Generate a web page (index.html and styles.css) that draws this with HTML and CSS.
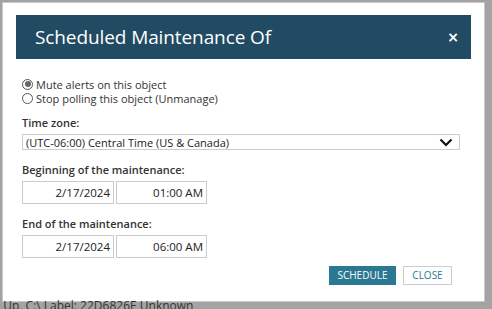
FILE: index.html
```html
<!DOCTYPE html>
<html>
<head>
<meta charset="utf-8">
<link rel="stylesheet" href="styles.css">
</head>
<body>
<div class="dialog">
  <div class="header">
    <span class="title">Scheduled Maintenance Of</span>
    <span class="close-x">×</span>
  </div>
  <div class="body">
    <label class="radio"><span class="dot checked"></span>Mute alerts on this object</label>
    <label class="radio"><span class="dot"></span>Stop polling this object (Unmanage)</label>
    <div class="label tz">Time zone:</div>
    <div class="select">
      <span>(UTC-06:00) Central Time (US &amp; Canada)</span>
      <svg width="14" height="9" viewBox="0 0 14 9"><path d="M1.5 1.5 L7 7 L12.5 1.5" fill="none" stroke="#111" stroke-width="2.2"/></svg>
    </div>
    <div class="label">Beginning of the maintenance:</div>
    <div class="pair">
      <div class="inp date">2/17/2024</div>
      <div class="inp time">01:00 AM</div>
    </div>
    <div class="label">End of the maintenance:</div>
    <div class="pair">
      <div class="inp date">2/17/2024</div>
      <div class="inp time">06:00 AM</div>
    </div>
    <div class="actions">
      <button class="btn primary">SCHEDULE</button>
      <button class="btn secondary">CLOSE</button>
    </div>
  </div>
</div>
<div class="behind">: Up, C:\ Label: 22D6826E Unknown</div>
</body>
</html>
```
FILE: styles.css
```css
html, body {
  margin: 0;
  padding: 0;
}
body {
  background: #a3a3a3;
  font-family: "Open Sans", "Noto Sans", sans-serif;
  width: 492px;
  height: 309px;
  overflow: hidden;
  padding-top: 2px;
  box-sizing: border-box;
}
.dialog {
  margin-left: 2px;
  width: 483px;
  height: 300px;
  box-sizing: border-box;
  background: #fff;
  border: 1px solid #c8c8c8;
  padding: 12px 13px 0 13px;
}
.header {
  background: #214a63;
  height: 44px;
  display: flex;
  align-items: center;
  justify-content: space-between;
  padding: 0 12px 0 19px;
  color: #fff;
}
.title {
  font-size: 19px;
  letter-spacing: -0.1px;
}
.close-x {
  font-size: 14px;
  font-weight: 700;
  font-family: "DejaVu Sans", sans-serif;
}
.body {
  padding: 18px 0 0 6px;
  color: #333;
  font-size: 11px;
}
.radio {
  display: flex;
  align-items: center;
  height: 14px;
  gap: 3px;
}
.dot {
  width: 9px;
  height: 9px;
  border: 1px solid #555;
  border-radius: 50%;
  display: inline-flex;
  align-items: center;
  justify-content: center;
  background: #fff;
}
.dot.checked::after {
  content: "";
  width: 6px;
  height: 6px;
  border-radius: 50%;
  background: #666;
}
.label {
  font-weight: 600;
  color: #333;
  margin-top: 12px;
  height: 15px;
  line-height: 15px;
}
.label.tz {
  margin-top: 10px;
}
.select {
  margin-top: 4px;
  width: 438px;
  height: 16px;
  box-sizing: border-box;
  border: 1px solid #ccc;
  display: flex;
  align-items: center;
  justify-content: space-between;
  padding: 0 6px 0 3px;
  color: #222;
}
.pair {
  display: flex;
  gap: 2px;
  margin-top: 4px;
}
.inp {
  height: 23px;
  box-sizing: border-box;
  border: 1px solid #ccc;
  text-align: right;
  line-height: 21px;
  padding-right: 3px;
  color: #222;
  font-size: 11.5px;
}
.date { width: 92px; }
.time { width: 91px; }
.actions {
  display: flex;
  justify-content: flex-end;
  gap: 7px;
  margin-top: 8px;
  padding-right: 19px;
}
.btn {
  height: 19px;
  font-family: "Open Sans", sans-serif;
  font-size: 10px;
  padding: 0;
  box-sizing: border-box;
  line-height: 17px;
}
.primary {
  width: 67px;
  background: #2a7891;
  color: #fff;
  border: 1px solid #2a7891;
}
.secondary {
  width: 49px;
  background: #fff;
  color: #2a7891;
  border: 1px solid #ccc;
}
.behind {
  font-family: "Open Sans", sans-serif;
  font-size: 12px;
  color: #333;
  margin-left: -3px;
  line-height: 14px;
  margin-top: -3px;
}
```
